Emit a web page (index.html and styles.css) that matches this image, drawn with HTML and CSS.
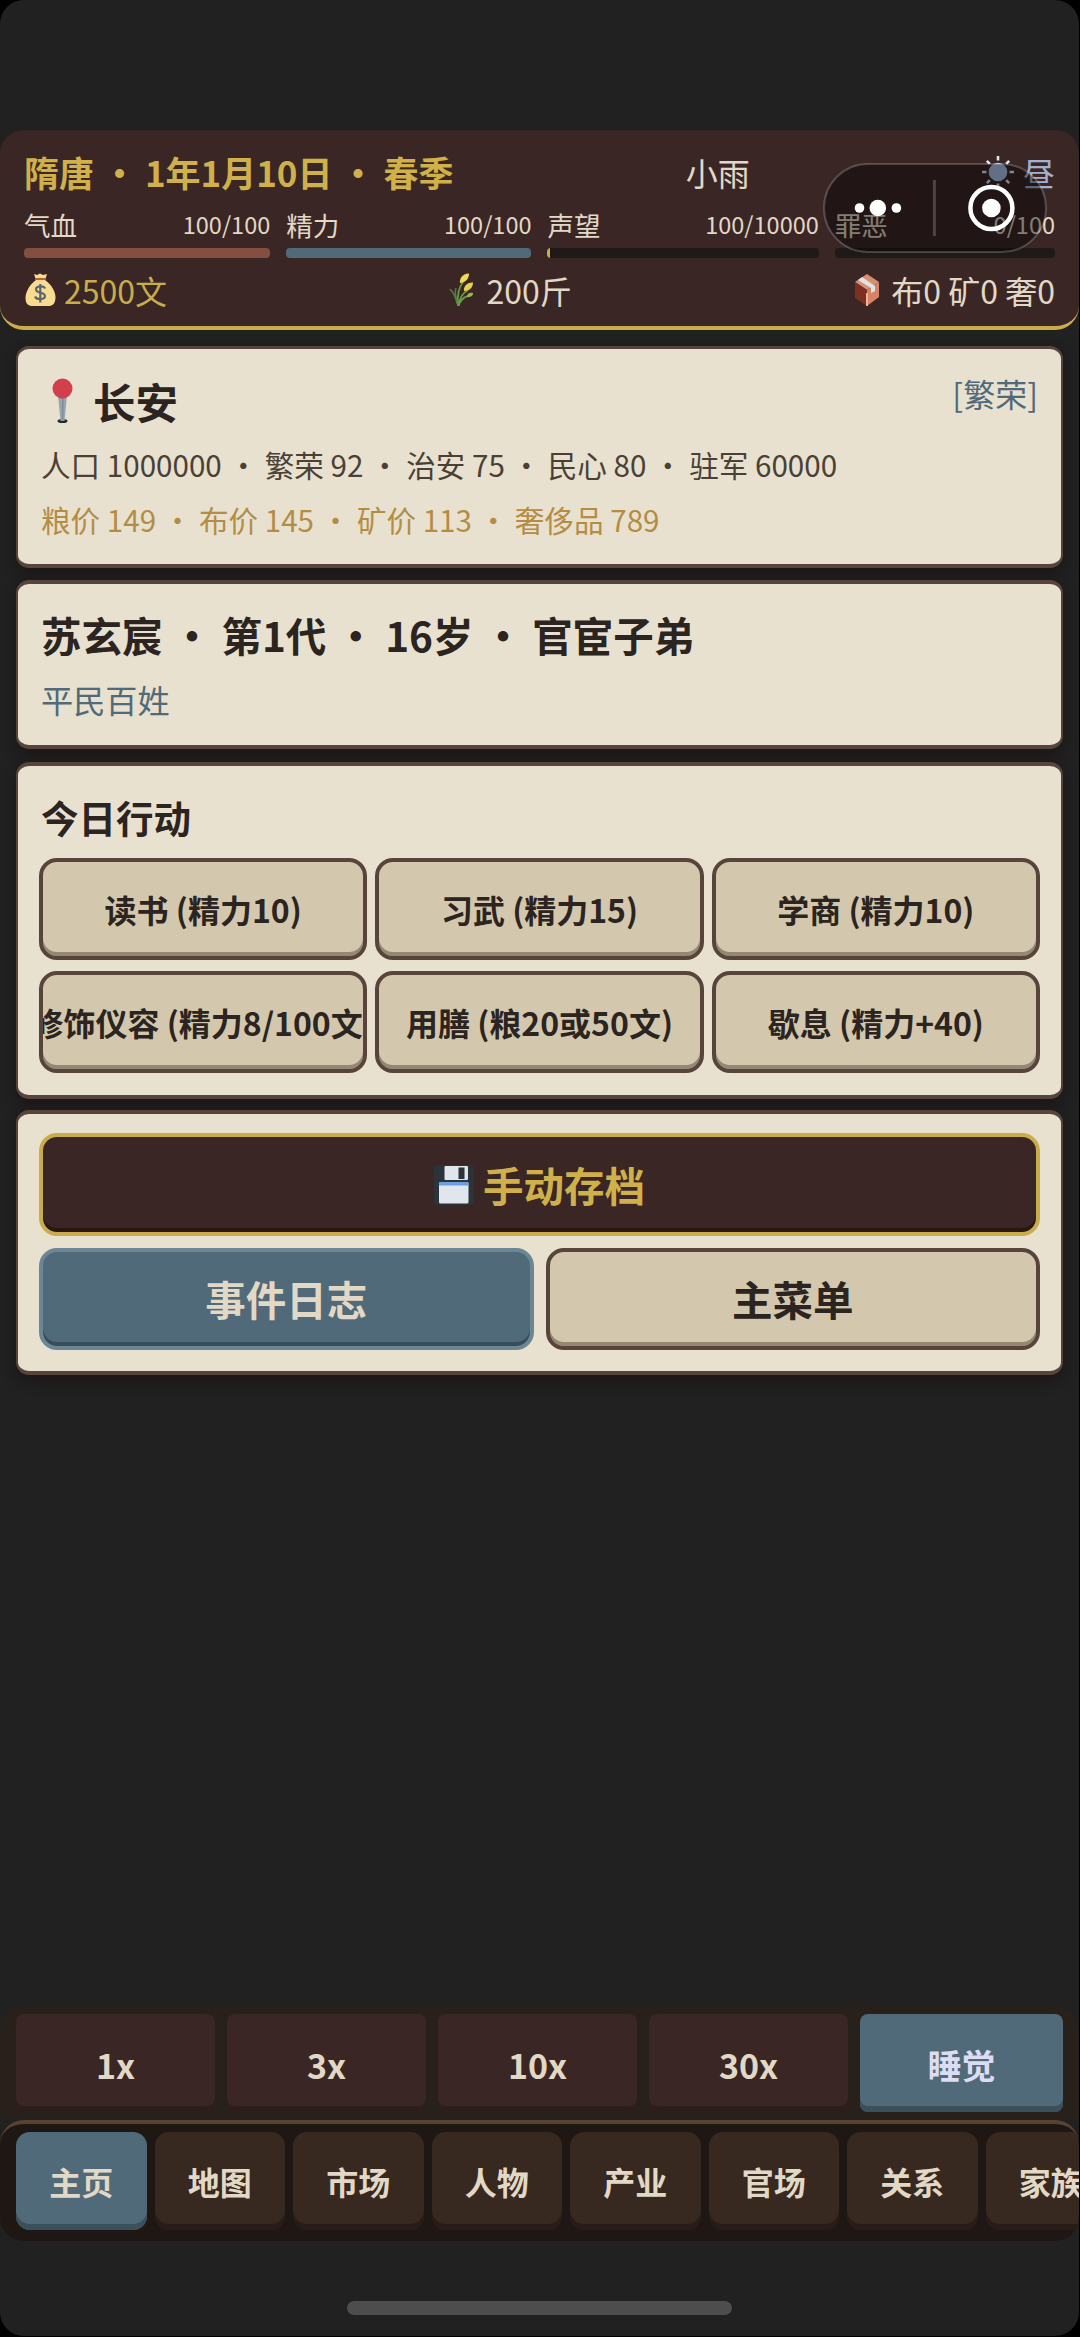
FILE: index.html
```html
<!DOCTYPE html>
<html lang="zh-CN">
<head>
<meta charset="utf-8">
<title>隋唐</title>
<link rel="stylesheet" href="styles.css">
</head>
<body>
<div class="app">
  <header class="status">
    <div class="row date-row">
      <span class="date">隋唐 • 1年1月10日 • 春季</span>
      <span>小雨</span>
      <span class="daytime">
        <svg class="sun" viewBox="0 0 32 32"><circle cx="16" cy="16" r="9.3" fill="#a9c0e4"/><g stroke-width="2.6" stroke="#dfe3ee"><path d="M16 0v4.500M16 27.500V32M0 16h4.500M27.500 16H32M4.800 4.800l3 3M24.200 24.200l3 3M4.800 27.200l3-3M24.200 7.800l3-3"/></g></svg>
        <span>昼</span>
      </span>
    </div>
    <div class="stats">
      <div class="stat"><div class="stat-text"><span>气血</span><span class="num">100/100</span></div><div class="bar"><div class="fill hp" style="width:100%"></div></div></div>
      <div class="stat"><div class="stat-text"><span>精力</span><span class="num">100/100</span></div><div class="bar"><div class="fill energy" style="width:100%"></div></div></div>
      <div class="stat"><div class="stat-text"><span>声望</span><span class="num">100/10000</span></div><div class="bar"><div class="fill fame" style="width:1%"></div></div></div>
      <div class="stat"><div class="stat-text"><span>罪恶</span><span class="num">0/100</span></div><div class="bar"></div></div>
    </div>
    <div class="row goods">
      <span class="good money">
        <svg class="emoji" viewBox="0 0 33 34"><path d="M10 1l3 1 3-1.500 3 1.500 4-1-2 6c6 4 11 12 10.500 18-.4 6-3 8-7 8H8.500c-4 0-7-2-7-8C1.500 19 6 11 12 7z" fill="#fadb92"/><path d="M11 6h11" stroke="#b0603a" stroke-width="2"/><path d="M21 15.500c-1-3-9-3-9 1s9 2.500 9 6.500-8.500 4-10 .5M16.300 11v18.500" fill="none" stroke="#5a6672" stroke-width="2.200"/></svg>
        <span>2500文</span>
      </span>
      <span class="good">
        <svg class="emoji" viewBox="0 0 33 34"><g fill="none" stroke="#68994a" stroke-width="1.800"><path d="M11 33C10 22 12 14 16 9M12 33c0-9 4-13 9-16M12 31c4-7 7-8 11-8"/><path d="M10 31C9 25 7 20 3 16M10 28c-2-6-2-10-1-13" stroke="#4f8040" stroke-width="1.500"/></g><path d="M13 10c-1-4 3-10 9-9.500 0 5-3 9-9 9.500z" fill="#f3d65d"/><path d="M17 18c-1-4 3-9 9-8.500 0 5-3 8-9 8.500z" fill="#e8ce53"/><path d="M20 24c0-3 2-5 6-4 0 3-2 4-6 4z" fill="#9bb550"/></svg>
        <span>200斤</span>
      </span>
      <span class="good">
        <svg class="emoji" viewBox="0 0 33 34"><path d="M16 1l12 8-12 8-12-8z" fill="#d98e72"/><path d="M4 9l12 8v16L4 25z" fill="#7c3021"/><path d="M16 17l12-8v15l-12 9z" fill="#d78466"/><path d="M7 7l4-3 13 9v5l-4 2v-5z" fill="#dbe4e6"/><path d="M16 20v13" stroke="#efb296" stroke-width="2"/></svg>
        <span>布0 矿0 奢0</span>
      </span>
    </div>
    <div class="capsule">
      <svg viewBox="0 0 224 90"><rect x="1" y="1" width="222" height="88" rx="44" fill="#000" fill-opacity=".42" stroke="#fff" stroke-opacity=".2" stroke-width="2"/><g fill="#fff"><circle cx="36.500" cy="45" r="4.800"/><circle cx="54.800" cy="45" r="8.300"/><circle cx="73.400" cy="45" r="4.800"/><circle cx="168.400" cy="45" r="9.300"/></g><path d="M111.400 17v56" stroke="#fff" stroke-opacity=".2" stroke-width="3"/><circle cx="168.400" cy="45" r="21" fill="none" stroke="#fff" stroke-width="4.500"/></svg>
    </div>
  </header>

  <main class="content">
    <section class="card city">
      <div class="city-head">
        <h2 class="city-name">
          <svg class="pin" viewBox="0 0 43 46"><ellipse cx="21.500" cy="43" rx="5" ry="2" fill="#23282b"/><path d="M17.200 19h8.600l-2.300 24h-4z" fill="#98a5b1"/><path d="M22 19l-.5 24" stroke="#7f8d99" stroke-width="1.500"/><circle cx="21.500" cy="10.500" r="10" fill="#d33f4a"/></svg>
          <span>长安</span>
        </h2>
        <span class="tag">[繁荣]</span>
      </div>
      <p class="line facts">人口 1000000 • 繁荣 92 • 治安 75 • 民心 80 • 驻军 60000</p>
      <p class="line prices">粮价 149 • 布价 145 • 矿价 113 • 奢侈品 789</p>
    </section>

    <section class="card person">
      <h2 class="person-name">苏玄宸 • 第1代 • 16岁 • 官宦子弟</h2>
      <p class="rank">平民百姓</p>
    </section>

    <section class="card actions">
      <h3 class="actions-title">今日行动</h3>
      <div class="action-grid">
        <button class="btn"><span>读书 (精力10)</span></button>
        <button class="btn"><span>习武 (精力15)</span></button>
        <button class="btn"><span>学商 (精力10)</span></button>
        <button class="btn"><span>修饰仪容 (精力8/100文)</span></button>
        <button class="btn"><span>用膳 (粮20或50文)</span></button>
        <button class="btn"><span>歇息 (精力+40)</span></button>
      </div>
    </section>

    <section class="card system">
      <button class="btn large save">
        <svg class="disk" viewBox="0 0 40 40"><rect width="40" height="40" rx="4" fill="#2c333b"/><rect x="10.500" y="1" width="23.500" height="14" rx="1" fill="#e1e6ec"/><rect x="24.500" y="2.500" width="6" height="11.500" fill="#2c333b"/><rect x="5" y="17" width="29.500" height="21.500" rx="1.500" fill="#e1e6ec"/><path d="M5 20.500v-2A1.500 1.500 0 0 1 6.500 17H33a1.500 1.500 0 0 1 1.500 1.500v2z" fill="#6a9fe0"/></svg>
        <span>手动存档</span>
      </button>
      <div class="pair">
        <button class="btn large log"><span>事件日志</span></button>
        <button class="btn large"><span>主菜单</span></button>
      </div>
    </section>
  </main>

  <div class="speed">
    <button class="speed-btn">1x</button>
    <button class="speed-btn">3x</button>
    <button class="speed-btn">10x</button>
    <button class="speed-btn">30x</button>
    <button class="speed-btn sleep">睡觉</button>
  </div>

  <nav class="tabs">
    <a class="tab active">主页</a>
    <a class="tab">地图</a>
    <a class="tab">市场</a>
    <a class="tab">人物</a>
    <a class="tab">产业</a>
    <a class="tab">官场</a>
    <a class="tab">关系</a>
    <a class="tab">家族</a>
  </nav>
  <div class="home-bar"></div>
</div>
</body>
</html>
```
FILE: styles.css
```css
* { box-sizing: border-box; }
html, body { margin: 0; background: #000; }
body {
  width: 1080px;
  height: 2337px;
  overflow: hidden;
  font-family: "Noto Sans CJK SC", "Noto Sans", sans-serif;
  color: #e2d8c6;
}
h2, h3, p { margin: 0; }
button {
  font-family: inherit;
  border: 0;
  padding: 0;
  margin: 0;
}
svg { display: block; flex: none; }

.app {
  display: flex;
  flex-direction: column;
  width: 1079px;
  height: 2336px;
  padding-top: 130px;
  background: #212121;
  border-radius: 24px;
  overflow: hidden;
}

/* status header */
.status {
  position: relative;
  flex: none;
  height: 200px;
  padding: 18px 24px 0;
  background: #3a2725;
  border-bottom: 4px solid #c9ac4c;
  border-radius: 24px;
}
.row {
  display: flex;
  justify-content: space-between;
  align-items: center;
  font-size: 32px;
}
.date-row { height: 48px; line-height: 48px; }
.date { font-size: 35px; font-weight: 700; color: #d0b04b; }
.daytime { display: flex; align-items: center; gap: 9px; color: #a3b0cf; }
.sun { width: 32px; height: 32px; }
.stats {
  display: grid;
  grid-template-columns: 246fr 245fr 271fr 220fr;
  gap: 16px;
  margin-top: 10px;
}
.stat-text {
  display: flex;
  justify-content: space-between;
  height: 37px;
  line-height: 37px;
  font-size: 26.500px;
}
.num { font-size: 23.500px; }
.bar {
  height: 10px;
  margin-top: 5px;
  border-radius: 4px;
  background: #1f1a17;
  overflow: hidden;
}
.fill { height: 100%; }
.hp { background: #844f40; }
.energy { background: #516a7a; }
.fame { background: #c9ac4c; }
.goods { height: 44px; line-height: 44px; margin-top: 10px; }
.good { display: flex; align-items: center; gap: 7px; }
.money { color: #c9ac4c; }
.emoji { width: 33px; height: 34px; }
.capsule {
  position: absolute;
  left: 823px;
  top: 33px;
  width: 224px;
  height: 90px;
}

/* cards */
.content {
  flex: 1;
  display: flex;
  flex-direction: column;
  padding: 16px 16px 0;
}
.card {
  flex: none;
  background: #e8e1cf;
  border: solid #57443a;
  border-width: 4px 2px;
  border-radius: 13px;
  box-shadow: 0 6px 14px rgba(20, 12, 8, .45);
  color: #2b2420;
}
.city {
  height: 222px;
  border-top-width: 3px;
  padding: 22px 23px 0;
  margin-bottom: 12px;
}
.city-head {
  display: flex;
  justify-content: space-between;
  align-items: flex-start;
}
.city-name {
  display: flex;
  align-items: center;
  gap: 9px;
  height: 60px;
  line-height: 60px;
  font-size: 42.500px;
}
.pin { width: 43px; height: 46px; }
.tag { font-size: 32px; line-height: 44px; color: #516a7a; }
.line { font-size: 29.600px; line-height: 44px; white-space: nowrap; }
.facts { margin-top: 12px; color: #4a4036; }
.prices { margin-top: 11px; color: #b48d45; }
.person { height: 169px; padding: 21px 23px 0; margin-bottom: 13px; }
.person-name { font-size: 40.500px; line-height: 60px; }
.rank { font-size: 32.200px; line-height: 48px; margin-top: 10px; color: #516a7a; }
.actions { height: 337px; padding: 24px 21px 0; margin-bottom: 11px; }
.actions-title { font-size: 37.500px; line-height: 54px; padding-left: 2px; }
.action-grid {
  display: grid;
  grid-template-columns: repeat(3, 1fr);
  gap: 11px 8px;
  margin-top: 14px;
}
.btn {
  display: flex;
  justify-content: center;
  align-items: center;
  min-width: 0;
  height: 102px;
  border: 4px solid #57443a;
  border-radius: 18px;
  background: #d3c8ad;
  box-shadow: inset 0 -4px 0 #948872;
  color: #2b2420;
  font-size: 32px;
  font-weight: 700;
  line-height: 46px;
  white-space: nowrap;
  overflow: hidden;
}
.system { height: 265px; padding: 19px 21px 0; }
.large { font-size: 40.500px; line-height: 58px; }
.save {
  gap: 9px;
  width: 100%;
  height: 103px;
  background: #3a2725;
  border-color: #c9ac4c;
  box-shadow: inset 0 -4px 0 #2a180f;
  color: #d0b04b;
}
.disk { width: 40px; height: 40px; }
.pair {
  display: grid;
  grid-template-columns: 1fr 1fr;
  gap: 12px;
  margin-top: 12px;
}
.log {
  background: #516a7a;
  border-color: #6b8796;
  box-shadow: inset 0 -4px 0 #384c5b;
  color: #e2d8c6;
}

/* speed controls */
.speed {
  flex: none;
  display: flex;
  gap: 12px;
  height: 114px;
  padding: 8px 16px 0;
  background: #28201b;
  border-radius: 24px 24px 0 0;
}
.speed-btn {
  width: 199px;
  height: 98px;
  padding-top: 2px;
  border-radius: 8px;
  background: #3a2725;
  box-shadow: inset 0 -6px 0 #2d1e1a;
  color: #e2d8c6;
  font-size: 34px;
  font-weight: 700;
}
.sleep {
  flex: 1;
  background: #516a7a;
  box-shadow: inset 0 -6px 0 #3b4f5d;
  color: #dcdcf2;
}

/* bottom tabs */
.tabs {
  flex: none;
  display: flex;
  gap: 8px;
  height: 121px;
  padding: 8px 16px 0;
  background: #1f1713;
  border-top: 4px solid #574233;
  border-radius: 24px;
  overflow: hidden;
}
.tab {
  flex: none;
  width: 130.500px;
  height: 98px;
  border-radius: 14px;
  background: #372820;
  box-shadow: inset 0 -6px 0 #291b17;
  font-size: 32px;
  font-weight: 700;
  line-height: 98px;
  text-align: center;
}
.active { background: #516a7a; box-shadow: inset 0 -6px 0 #3b4f5d; }

.home-bar {
  flex: none;
  align-self: center;
  width: 385px;
  height: 14px;
  margin: 60px 0 21px;
  border-radius: 7px;
  background: #4d4d4d;
}
```
